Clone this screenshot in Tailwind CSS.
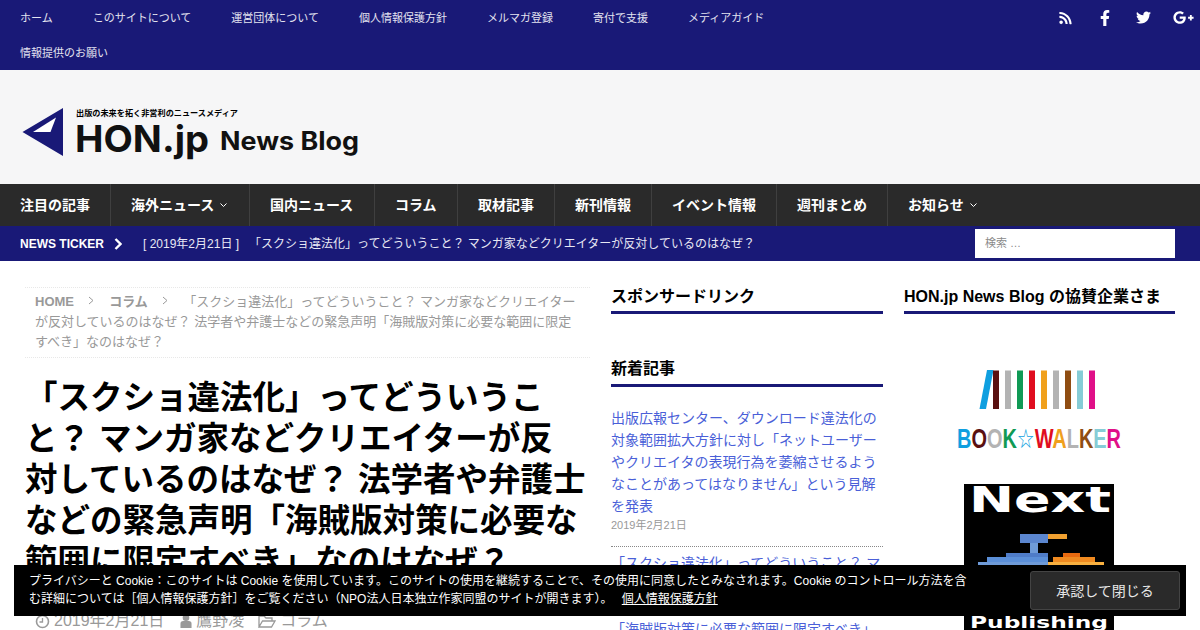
<!DOCTYPE html>
<html lang="ja">
<head>
    <meta charset="UTF-8">
    <meta name="viewport" content="width=device-width, initial-scale=1.0">
    <title>HON.jp News Blog</title>
    <script src="https://cdn.jsdelivr.net/npm/@tailwindcss/browser@4"></script>
</head>
<body class="relative h-[630px] overflow-hidden bg-white font-['Liberation_Sans','Noto_Sans_CJK_JP',sans-serif] text-black">
    <!-- top bar -->
    <div class="flex h-[70px] justify-between bg-[#191977] pl-5">
        <ul class="flex w-[800px] flex-wrap content-start gap-x-10 pt-[1px] text-[11px] text-[#e4e4f0]">
            <li class="flex h-[35px] items-center">ホーム</li>
            <li class="flex h-[35px] items-center">このサイトについて</li>
            <li class="flex h-[35px] items-center">運営団体について</li>
            <li class="flex h-[35px] items-center">個人情報保護方針</li>
            <li class="flex h-[35px] items-center">メルマガ登録</li>
            <li class="flex h-[35px] items-center">寄付で支援</li>
            <li class="flex h-[35px] items-center">メディアガイド</li>
            <li class="flex h-[35px] items-center">情報提供のお願い</li>
        </ul>
        <div class="flex h-[35px] text-white">
            <div class="flex w-[39px] items-center justify-center"><svg class="h-[14px] w-[13px] fill-current" viewBox="0 0 448 512"><path d="M128.081 415.959c0 35.369-28.672 64.041-64.041 64.041S0 451.328 0 415.959s28.672-64.041 64.041-64.041 64.04 28.673 64.04 64.041zm175.66 47.25c-8.354-154.6-132.185-278.587-286.95-286.95C7.656 175.765 0 183.105 0 192.253v48.069c0 8.415 6.49 15.472 14.887 16.018 111.832 7.284 201.473 96.702 208.772 208.772.547 8.397 7.604 14.887 16.018 14.887h48.069c9.149.001 16.489-7.655 15.995-16.79zm144.249.288C439.596 229.677 251.465 40.445 16.503 32.01 7.473 31.686 0 38.981 0 48.016v48.068c0 8.625 6.835 15.645 15.453 15.999 191.179 7.839 344.627 161.316 352.465 352.465.353 8.618 7.373 15.453 15.999 15.453h48.068c9.034-.001 16.329-7.474 16.005-16.504z"/></svg></div>
            <div class="flex w-[39px] items-center justify-center"><svg class="h-[16px] w-[10px] fill-current" viewBox="0 0 320 512"><path d="M279.14 288l14.22-92.66h-88.91v-60.13c0-25.35 12.42-50.06 52.24-50.06h40.42V6.26S260.43 0 225.36 0c-73.22 0-121.08 44.38-121.08 124.72v70.62H22.89V288h81.39v224h100.17V288z"/></svg></div>
            <div class="flex w-[39px] items-center justify-center"><svg class="h-[15px] w-[15px] fill-current" viewBox="0 0 512 512"><path d="M459.37 151.716c.325 4.548.325 9.097.325 13.645 0 138.72-105.583 298.558-298.558 298.558-59.452 0-114.68-17.219-161.137-47.106 8.447.974 16.568 1.299 25.34 1.299 49.055 0 94.213-16.568 130.274-44.832-46.132-.975-84.792-31.188-98.112-72.772 6.498.974 12.995 1.624 19.818 1.624 9.421 0 18.843-1.3 27.614-3.573-48.081-9.747-84.143-51.98-84.143-102.985v-1.299c13.969 7.797 30.214 12.67 47.431 13.319-28.264-18.843-46.781-51.005-46.781-87.391 0-19.492 5.197-37.36 14.294-52.954 51.655 63.675 129.3 105.258 216.365 109.807-1.624-7.797-2.599-15.918-2.599-24.04 0-57.828 46.782-104.934 104.934-104.934 30.213 0 57.502 12.67 76.67 33.137 23.715-4.548 46.456-13.32 66.599-25.34-7.798 24.366-24.366 44.833-46.132 57.827 21.117-2.273 41.584-8.122 60.426-16.243-14.292 20.791-32.161 39.308-52.628 54.253z"/></svg></div>
            <div class="ml-[3px] flex w-[34px] items-center justify-center"><svg class="h-[17px] w-[21px] fill-current" viewBox="0 0 640 512"><path d="M386.061 228.496c1.834 9.692 3.143 19.384 3.143 31.956C389.204 370.205 315.599 448 204.8 448c-106.084 0-192-85.915-192-192s85.916-192 192-192c51.864 0 95.083 18.859 128.611 50.292l-52.126 50.03c-14.145-13.621-39.028-29.599-76.485-29.599-65.484 0-118.92 54.221-118.92 121.277 0 67.056 53.436 121.277 118.92 121.277 75.961 0 104.513-54.745 108.965-82.773H204.8v-66.009h181.261zm185.406 6.437V179.2h-56.001v55.733h-55.733v56.001h55.733v55.733h56.001v-55.733H627.2v-56.001h-55.733z"/></svg></div>
        </div>
    </div>

    <!-- logo -->
    <div class="h-[114px] bg-[#f6f6f7]">
        <svg class="block" width="400" height="114" viewBox="0 70 400 114">
            <path d="M22.5 132 L63 108 V156 Z" fill="#191977"/>
            <path d="M33 132 L56 117.5 L50.5 132 Z" fill="#fff"/>
            <text x="76" y="116" font-size="8" font-weight="700" textLength="162" lengthAdjust="spacingAndGlyphs" font-family="'Noto Sans CJK JP', sans-serif">出版の未来を拓く非営利のニュースメディア</text>
            <text x="75" y="152" font-size="37" font-weight="700" textLength="134" lengthAdjust="spacingAndGlyphs" font-family="Inter, sans-serif" fill="#111">HON.jp</text>
            <text x="220" y="150" font-size="25" font-weight="700" textLength="139" lengthAdjust="spacingAndGlyphs" font-family="Inter, sans-serif" fill="#111">News Blog</text>
        </svg>
    </div>

    <!-- main nav -->
    <ul class="flex h-[42px] bg-[#2a2a2a] text-sm font-bold text-white">
        <li class="flex w-[111px] items-center border-r border-[#3f3f3f] pl-5">注目の記事</li>
        <li class="flex w-[139px] items-center gap-[5px] border-r border-[#3f3f3f] pl-5">海外ニュース
            <svg class="h-2 w-[9px]" viewBox="0 0 9 8" fill="none" stroke="currentColor"><path d="M1.5 2.5 L4.5 5.5 L7.5 2.5"/></svg>
        </li>
        <li class="flex w-[125px] items-center border-r border-[#3f3f3f] pl-5">国内ニュース</li>
        <li class="flex w-[83px] items-center border-r border-[#3f3f3f] pl-5">コラム</li>
        <li class="flex w-[97px] items-center border-r border-[#3f3f3f] pl-5">取材記事</li>
        <li class="flex w-[97px] items-center border-r border-[#3f3f3f] pl-5">新刊情報</li>
        <li class="flex w-[125px] items-center border-r border-[#3f3f3f] pl-5">イベント情報</li>
        <li class="flex w-[111px] items-center border-r border-[#3f3f3f] pl-5">週刊まとめ</li>
        <li class="flex items-center gap-[5px] px-5">お知らせ
            <svg class="h-2 w-[9px]" viewBox="0 0 9 8" fill="none" stroke="currentColor"><path d="M1.5 2.5 L4.5 5.5 L7.5 2.5"/></svg>
        </li>
    </ul>

    <!-- ticker -->
    <div class="flex h-[35px] items-center bg-[#191977] pl-5 pr-[25px] text-xs text-[#e8e8f4]">
        <span class="font-bold text-white">NEWS TICKER</span>
        <svg class="ml-[10px] h-3 w-2 text-white" viewBox="0 0 8 12" fill="none" stroke="currentColor" stroke-width="2.4"><path d="M1.5 1 L6.5 6 L1.5 11"/></svg>
        <span class="ml-[21px] whitespace-pre">[ 2019年2月21日 ]   「スクショ違法化」ってどういうこと？ マンガ家などクリエイターが反対しているのはなぜ？</span>
        <div class="ml-auto flex h-[29px] w-[200px] items-center bg-white pl-[10px] text-[11px] text-[#8a8a8a]">検索 …</div>
    </div>

    <!-- content -->
    <div class="flex pl-[25px] pr-[25px] pt-[26px]">
        <div class="w-[565px] shrink-0">
            <div class="h-[71px] border-y border-dotted border-[#e8e8e8] px-[10px] pt-1 text-[13px] leading-5 text-[#999]">
                <span class="font-bold">HOME</span>
                <svg class="mx-[10px] inline h-[9px] w-[6px] align-[1px]" viewBox="0 0 6 9" fill="none" stroke="currentColor"><path d="M1 1 L5 4.5 L1 8"/></svg>
                <span class="ml-[2px] font-bold">コラム</span>
                <svg class="mx-[10px] inline h-[9px] w-[6px] align-[1px]" viewBox="0 0 6 9" fill="none" stroke="currentColor"><path d="M1 1 L5 4.5 L1 8"/></svg>
                <span class="ml-[2px]">「スクショ違法化」ってどういうこと？ マンガ家などクリエイターが反対しているのはなぜ？ 法学者や弁護士などの緊急声明「海賊版対策に必要な範囲に限定すべき」なのはなぜ？</span>
            </div>
            <h1 class="mt-[20px] whitespace-nowrap text-[32.5px] font-bold leading-[41px]">「スクショ違法化」ってどういうこ<br>と？ マンガ家などクリエイターが反<br>対しているのはなぜ？ 法学者や弁護士<br>などの緊急声明「海賊版対策に必要な<br>範囲に限定すべき」なのはなぜ？</h1>
            <div class="mt-[26px] flex items-center pl-[10px] text-base leading-6 text-[#999]">
                <svg class="h-[15px] w-[15px]" viewBox="0 0 15 15" fill="none" stroke="currentColor" stroke-width="1.6"><circle cx="7.5" cy="7.5" r="6"/><path d="M7.5 4 V8 H4.5" stroke-width="1.3"/></svg>
                <span class="ml-[4px]">2019年2月21日</span>
                <svg class="ml-[16px] h-[14px] w-[12px] fill-current" viewBox="0 0 13 15"><circle cx="6.500" cy="4" r="3.600"/><path d="M0.500 15 V10.500 Q0.500 7.500 3.500 7.500 H9.500 Q12.500 7.500 12.500 10.500 V15 Z"/></svg>
                <span class="ml-[4px]">鷹野凌</span>
                <svg class="ml-[14px] h-[15px] w-[18px]" viewBox="0 0 18 15" fill="none" stroke="currentColor" stroke-width="1.3"><path d="M1 13 V2 H6 L8 4 H14 V7 M1 13 L4.5 7 H17 L13.5 13 Z"/></svg>
                <span class="ml-[4px]">コラム</span>
            </div>
        </div>

        <div class="ml-[21px] w-[272px] shrink-0">
            <h3 class="h-[27px] border-b-[3px] border-[#191977] text-base font-bold leading-[20px]">スポンサードリンク</h3>
            <h3 class="mt-[46px] h-[27px] border-b-[3px] border-[#191977] text-base font-bold leading-[18px]">新着記事</h3>
            <div class="mt-5 border-b border-dotted border-[#888] pb-[13px]">
                <a class="block text-sm leading-[22px] text-[#4a5fd8]">出版広報センター、ダウンロード違法化の対象範囲拡大方針に対し「ネットユーザーやクリエイタの表現行為を萎縮させるようなことがあってはなりません」という見解を発表</a>
                <p class="text-[11px] leading-4 text-[#999]">2019年2月21日</p>
            </div>
            <a class="mt-[5px] block text-sm leading-[22px] text-[#4a5fd8]">「スクショ違法化」ってどういうこと？ マンガ家などクリエイターが反対しているのはなぜ？ 法学者や弁護士などの緊急声明「海賊版対策に必要な範囲に限定すべき」</a>
        </div>

        <div class="ml-[21px] w-[271px] shrink-0">
            <h3 class="h-[27px] border-b-[3px] border-[#191977] text-base font-bold leading-[20px]">HON.jp News Blog の協賛企業さま</h3>
            <svg class="mt-[56px] block" width="271" height="80" viewBox="904 370 271 80">
                <path d="M987 370 H993.500 L986 409 H979.500 Z" fill="#0f9fe0"/>
                <rect x="993" y="370.500" width="6" height="38.500" fill="#5a1010"/>
                <rect x="1005" y="370.500" width="6" height="38.500" fill="#b3b3b3"/>
                <rect x="1017" y="370.500" width="6" height="38.500" fill="#109a55"/>
                <rect x="1029" y="370.500" width="6" height="38.500" fill="#e00d20"/>
                <rect x="1041" y="370.500" width="6" height="38.500" fill="#f0a01c"/>
                <rect x="1053" y="370.500" width="6" height="38.500" fill="#b3b3b3"/>
                <rect x="1065" y="370.500" width="6" height="38.500" fill="#8f4d12"/>
                <rect x="1077" y="370.500" width="6" height="38.500" fill="#86ccd6"/>
                <rect x="1089" y="370.500" width="6" height="38.500" fill="#e01088"/>
                <text x="957" y="448" font-size="27" font-weight="700" textLength="164" lengthAdjust="spacingAndGlyphs" font-family="'Liberation Sans', sans-serif"><tspan fill="#0f9fe0">B</tspan><tspan fill="#5a1010">O</tspan><tspan fill="#b3b3b3">O</tspan><tspan fill="#109a55">K</tspan><tspan fill="#0f9fe0" font-weight="400" font-family="'DejaVu Sans'">☆</tspan><tspan fill="#e00d20">W</tspan><tspan fill="#f0a01c">A</tspan><tspan fill="#b3b3b3">L</tspan><tspan fill="#8f4d12">K</tspan><tspan fill="#86ccd6">E</tspan><tspan fill="#e01088">R</tspan></text>
            </svg>
            <svg class="ml-[60px] mt-[34px] block" width="150" height="146" viewBox="964 484 150 146">
                <rect x="964" y="484" width="150" height="146" fill="#000"/>
                <text x="969" y="512" font-size="35" font-weight="700" textLength="142" lengthAdjust="spacingAndGlyphs" font-family="'DejaVu Sans', sans-serif" fill="#fff">Next</text>
                <rect x="1020" y="534" width="28" height="9" fill="#5b86cf"/>
                <rect x="1048" y="534" width="19" height="5" fill="#f0a030"/>
                <rect x="1030" y="543" width="8" height="10" fill="#6f9bd8"/>
                <rect x="1006" y="553" width="42" height="4" fill="#4f7cc8"/>
                <rect x="987" y="557" width="61" height="5" fill="#5b8fd8"/>
                <rect x="978" y="562" width="70" height="5" fill="#6f9bd8"/>
                <rect x="1063" y="553" width="17" height="4" fill="#e86a10"/>
                <rect x="1053" y="557" width="42" height="5" fill="#f08a20"/>
                <rect x="1048" y="562" width="56" height="5" fill="#f8b040"/>
                <text x="970" y="628" font-size="15" font-weight="700" textLength="138" lengthAdjust="spacingAndGlyphs" font-family="'DejaVu Sans', sans-serif" fill="#fff">Publishing</text>
            </svg>
        </div>
    </div>

    <!-- cookie notice -->
    <div class="absolute bottom-[14px] left-[14px] right-[14px] flex h-[51px] justify-between bg-black pl-[15px] pr-[6px] pt-[6px] text-xs text-white">
        <p class="w-[945px] pt-[1px] leading-[18px]">プライバシーと Cookie：このサイトは Cookie を使用しています。このサイトの使用を継続することで、その使用に同意したとみなされます。Cookie のコントロール方法を含む詳細については［個人情報保護方針］をご覧ください（NPO法人日本独立作家同盟のサイトが開きます）。 <a class="ml-[6px] underline">個人情報保護方針</a></p>
        <button class="flex h-[39px] w-[150px] items-center justify-center rounded-[3px] border border-[#444] bg-[#2a2a2a] text-sm text-[#e8e8e8]">承認して閉じる</button>
    </div>
</body>
</html>
